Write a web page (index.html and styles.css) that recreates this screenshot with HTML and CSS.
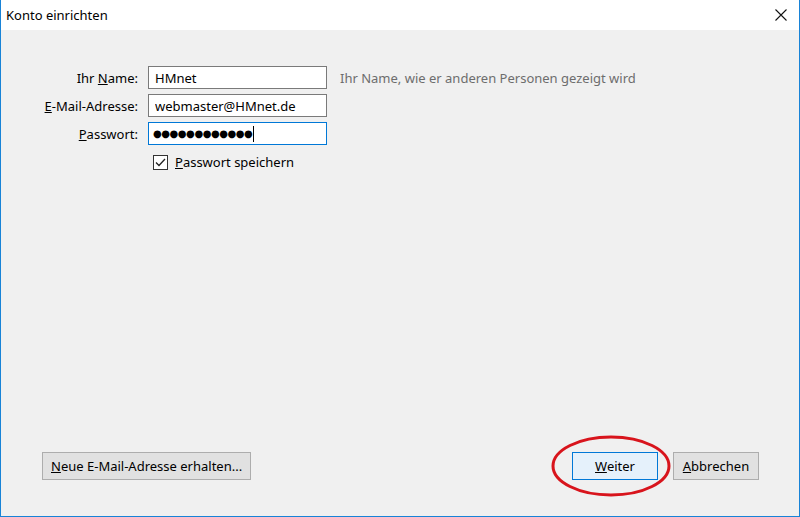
FILE: index.html
```html
<!DOCTYPE html>
<html lang="de">
<head>
  <meta charset="UTF-8">
  <title>Konto einrichten</title>
  <link rel="stylesheet" href="styles.css">
</head>
<body>
  <div class="window">
    <div class="titlebar">
      <span class="title">Konto einrichten</span>
      <svg class="close" width="12" height="12" viewBox="0 0 12 12">
        <path d="M0.5 0.5 L11.5 11.5 M11.5 0.5 L0.5 11.5" stroke="#111" stroke-width="1.1" fill="none"/>
      </svg>
    </div>

    <div class="content">
      <form class="form">
        <label for="name">Ihr <u>N</u>ame:</label>
        <input id="name" class="field" type="text" value="HMnet">
        <span class="hint">Ihr Name, wie er anderen Personen gezeigt wird</span>

        <label for="email"><u>E</u>-Mail-Adresse:</label>
        <input id="email" class="field" type="text" value="webmaster@HMnet.de">
        <span></span>

        <label for="pass"><u>P</u>asswort:</label>
        <div id="pass" class="field focused"><span class="dots">●●●●●●●●●●●●</span><span class="caret"></span></div>
        <span></span>

        <span></span>
        <div class="check">
          <svg class="box" width="15" height="15" viewBox="0 0 15 15">
            <rect x="0.5" y="0.5" width="14" height="14" fill="#fff" stroke="#333"/>
            <path d="M3 7.5 L6 10.5 L12 4" stroke="#222" stroke-width="1.3" fill="none"/>
          </svg>
          <span><u>P</u>asswort speichern</span>
        </div>
        <span></span>
      </form>

      <div class="footer">
        <button class="btn" type="button"><u>N</u>eue E-Mail-Adresse erhalten...</button>
        <div class="actions">
          <div class="marked">
            <button class="btn default" type="button"><u>W</u>eiter</button>
            <svg class="ring" width="122" height="64" viewBox="0 0 122 64">
              <ellipse cx="61" cy="32" rx="58" ry="29" fill="none" stroke="#d8141c" stroke-width="3"/>
            </svg>
          </div>
          <button class="btn" type="button"><u>A</u>bbrechen</button>
        </div>
      </div>
    </div>
  </div>
</body>
</html>
```

FILE: styles.css
```css
body {
  margin: 0;
  font-family: 'Segoe UI', 'Noto Sans', sans-serif;
  font-size: 13px;
  color: #000;
}
.window {
  width: 800px;
  height: 517px;
  box-sizing: border-box;
  border: 1px solid #1883d7;
  border-top: none;
  display: flex;
  flex-direction: column;
  background: #f0f0f0;
}
.titlebar {
  height: 30px;
  background: #fff;
  display: flex;
  align-items: center;
  justify-content: space-between;
  padding: 0 12px 0 5px;
  flex-shrink: 0;
}
.title {
  font-size: 13px;
}
.content {
  flex: 1;
  display: flex;
  flex-direction: column;
  padding: 36px 40px 36px 40px;
}
.form {
  display: grid;
  grid-template-columns: 97px 179px auto;
  column-gap: 10px;
  row-gap: 5px;
  align-items: center;
}
.form label {
  text-align: right;
  white-space: nowrap;
}
.field {
  box-sizing: border-box;
  height: 23px;
  width: 179px;
  margin: 0;
  border: 1px solid #7a7a7a;
  background: #fff;
  font-family: inherit;
  font-size: 13px;
  padding: 0 6px;
  outline: none;
}
.field.focused {
  border-color: #0078d7;
  display: flex;
  align-items: center;
  padding: 0 4px;
}
.dots {
  font-family: 'DejaVu Sans', sans-serif;
  font-size: 10px;
  letter-spacing: -0.45px;
}
.caret {
  width: 1px;
  height: 16px;
  background: #000;
  margin-left: 1px;
}
.hint {
  color: #6d6d6d;
  margin-left: 3px;
  white-space: nowrap;
}
.check {
  display: flex;
  align-items: center;
  gap: 7px;
  margin-top: 3px;
  padding-left: 5px;
}
.box {
  display: block;
}
.footer {
  margin-top: auto;
  display: flex;
  justify-content: space-between;
  align-items: center;
}
.actions {
  display: flex;
  gap: 14px;
}
.marked {
  position: relative;
}
.ring {
  position: absolute;
  left: -21px;
  top: -18px;
  pointer-events: none;
}
.btn {
  height: 28px;
  box-sizing: border-box;
  border: 1px solid #adadad;
  background: #e1e1e1;
  font-family: inherit;
  font-size: 13px;
  color: #000;
  padding: 0 8px;
  margin: 0 0 0 1px;
  min-width: 86px;
}
.btn.default {
  border-color: #0078d7;
  background: #e5f1fb;
}
```
